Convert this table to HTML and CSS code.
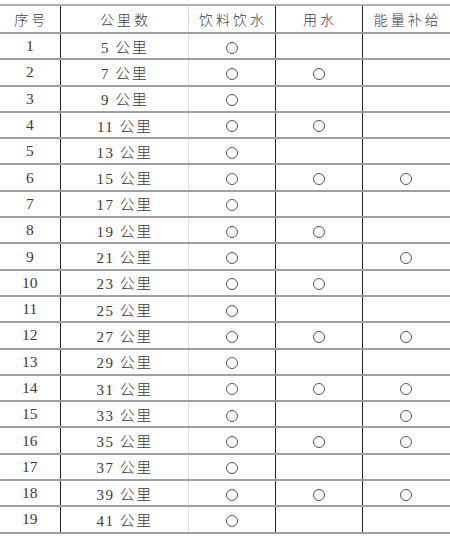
FILE: index.html
```html
<!DOCTYPE html>
<html lang="zh">
<head>
<meta charset="utf-8">
<link rel="stylesheet" href="styles.css">
</head>
<body>
<table class="tbl">
  <colgroup>
    <col class="c1"><col class="c2"><col class="c3"><col class="c4"><col class="c5">
  </colgroup>
  <thead>
    <tr><th class="sep-dark">序号</th><th class="sep-light">公里数</th><th class="sep-dark">饮料饮水</th><th class="sep-dark">用水</th><th>能量补给</th></tr>
  </thead>
  <tbody>
    <tr><td class="sep-dark">1</td><td class="sep-light km">5 公里</td><td class="sep-dark"><span class="o"></span></td><td class="sep-dark"></td><td></td></tr>
    <tr><td class="sep-dark">2</td><td class="sep-light km">7 公里</td><td class="sep-dark"><span class="o"></span></td><td class="sep-dark"><span class="o"></span></td><td></td></tr>
    <tr><td class="sep-dark">3</td><td class="sep-light km">9 公里</td><td class="sep-dark"><span class="o"></span></td><td class="sep-dark"></td><td></td></tr>
    <tr><td class="sep-dark">4</td><td class="sep-light km">11 公里</td><td class="sep-dark"><span class="o"></span></td><td class="sep-dark"><span class="o"></span></td><td></td></tr>
    <tr><td class="sep-dark">5</td><td class="sep-light km">13 公里</td><td class="sep-dark"><span class="o"></span></td><td class="sep-dark"></td><td></td></tr>
    <tr><td class="sep-dark">6</td><td class="sep-light km">15 公里</td><td class="sep-dark"><span class="o"></span></td><td class="sep-dark"><span class="o"></span></td><td><span class="o"></span></td></tr>
    <tr><td class="sep-dark">7</td><td class="sep-light km">17 公里</td><td class="sep-dark"><span class="o"></span></td><td class="sep-dark"></td><td></td></tr>
    <tr><td class="sep-dark">8</td><td class="sep-light km">19 公里</td><td class="sep-dark"><span class="o"></span></td><td class="sep-dark"><span class="o"></span></td><td></td></tr>
    <tr><td class="sep-dark">9</td><td class="sep-light km">21 公里</td><td class="sep-dark"><span class="o"></span></td><td class="sep-dark"></td><td><span class="o"></span></td></tr>
    <tr><td class="sep-dark">10</td><td class="sep-light km">23 公里</td><td class="sep-dark"><span class="o"></span></td><td class="sep-dark"><span class="o"></span></td><td></td></tr>
    <tr><td class="sep-dark">11</td><td class="sep-light km">25 公里</td><td class="sep-dark"><span class="o"></span></td><td class="sep-dark"></td><td></td></tr>
    <tr><td class="sep-dark">12</td><td class="sep-light km">27 公里</td><td class="sep-dark"><span class="o"></span></td><td class="sep-dark"><span class="o"></span></td><td><span class="o"></span></td></tr>
    <tr><td class="sep-dark">13</td><td class="sep-light km">29 公里</td><td class="sep-dark"><span class="o"></span></td><td class="sep-dark"></td><td></td></tr>
    <tr><td class="sep-dark">14</td><td class="sep-light km">31 公里</td><td class="sep-dark"><span class="o"></span></td><td class="sep-dark"><span class="o"></span></td><td><span class="o"></span></td></tr>
    <tr><td class="sep-dark">15</td><td class="sep-light km">33 公里</td><td class="sep-dark"><span class="o"></span></td><td class="sep-dark"></td><td><span class="o"></span></td></tr>
    <tr><td class="sep-dark">16</td><td class="sep-light km">35 公里</td><td class="sep-dark"><span class="o"></span></td><td class="sep-dark"><span class="o"></span></td><td><span class="o"></span></td></tr>
    <tr><td class="sep-dark">17</td><td class="sep-light km">37 公里</td><td class="sep-dark"><span class="o"></span></td><td class="sep-dark"></td><td></td></tr>
    <tr><td class="sep-dark">18</td><td class="sep-light km">39 公里</td><td class="sep-dark"><span class="o"></span></td><td class="sep-dark"><span class="o"></span></td><td><span class="o"></span></td></tr>
    <tr><td class="sep-dark">19</td><td class="sep-light km">41 公里</td><td class="sep-dark"><span class="o"></span></td><td class="sep-dark"></td><td></td></tr>
  </tbody>
</table>
</body>
</html>
```
FILE: styles.css
```css
html, body {
  margin: 0;
  padding: 0;
  background: #fff;
}
body {
  padding-top: 4px;
  font-family: "Liberation Serif", "Noto Sans CJK SC", serif;
  color: #3c3c3c;
}
.tbl {
  width: 450px;
  border-collapse: collapse;
  table-layout: fixed;
}
.c1 { width: 60px; }
.c2 { width: 128px; }
.c3 { width: 87px; }
.c4 { width: 87px; }
.c5 { width: 88px; }
.tbl th, .tbl td {
  padding: 0;
  text-align: center;
  vertical-align: middle;
  border-bottom: 2px solid #a0a0a0;
  font-size: 15.5px;
  font-weight: 300;
}
.tbl th {
  height: 26px;
  border-top: 2px solid #b0b0b0;
  font-family: "Noto Sans CJK SC", sans-serif;
  font-size: 14px;
  letter-spacing: 3px;
  text-indent: 3px;
}
.tbl td {
  height: 24.3px;
}
.tbl .km {
  font-size: 15px;
  letter-spacing: 1.5px;
  text-indent: 1.5px;
}
.tbl .sep-dark { border-right: 1px solid #222; }
.tbl .sep-light { border-right: 1px solid #ddd; }
.o {
  display: inline-block;
  width: 12px;
  height: 12px;
  border: 1px solid #555;
  border-radius: 50%;
  vertical-align: middle;
  box-sizing: border-box;
}
```
